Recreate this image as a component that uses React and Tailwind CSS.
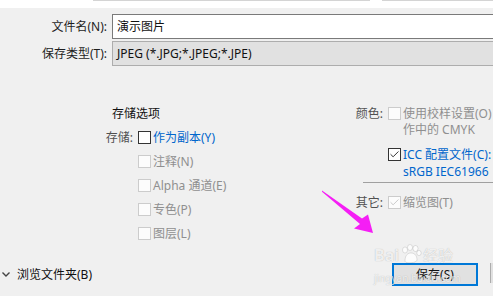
import { Check } from 'lucide-react';

const font = 'font-["Noto_Sans","Noto_Sans_CJK_SC",sans-serif]';

function Box({ checked, disabled }) {
  return (
    <span
      className={`flex h-[13px] w-[13px] shrink-0 items-center justify-center border ${
        disabled ? 'border-[#cccccc] bg-[#fcfcfc]' : 'border-[#333333] bg-white'
      }`}
    >
      {checked && (
        <Check
          className={`h-[11px] w-[11px] ${disabled ? 'text-[#c4c4c4]' : 'text-[#222222]'}`}
          strokeWidth={2}
        />
      )}
    </span>
  );
}

function Option({ label, text, checked, disabled, blue, labelWidth = 'w-[33px]' }) {
  return (
    <div className="flex h-[24px] items-center">
      <span className={`${labelWidth} shrink-0 pr-[5px] text-right text-[#505050]`}>{label}</span>
      <Box checked={checked} disabled={disabled} />
      <span
        className={`ml-[2px] whitespace-nowrap ${
          blue ? 'text-[#0066cc]' : disabled ? 'text-[#8f8f8f]' : 'text-[#1e1e1e]'
        }`}
      >
        {text}
      </span>
    </div>
  );
}

export default function App() {
  return (
    <div
      className={`relative flex h-[296px] w-[493px] flex-col overflow-hidden bg-[#f0f0f0] text-[12px] leading-[17px] text-[#1e1e1e] ${font}`}
    >
      {/* top strip */}
      <div className="flex h-[8px] shrink-0 bg-white">
        <div className="ml-[93px] h-px w-[277px] bg-[#d4d4d4]" />
        <div className="ml-[12px] h-px flex-1 bg-[#d4d4d4]" />
      </div>

      {/* file name */}
      <div className="mt-[6px] flex h-[25px] items-center">
        <span className="w-[112px] shrink-0 pr-[5px] text-right">文件名(N):</span>
        <div className="flex h-[25px] flex-1 items-center border border-r-0 border-[#7a7a7a] bg-white pl-[4px] text-[#111111]">
          演示图片
        </div>
      </div>

      {/* save type */}
      <div className="mt-[2px] flex h-[25px] items-center">
        <span className="w-[112px] shrink-0 pr-[5px] text-right">保存类型(T):</span>
        <div className="flex h-[25px] flex-1 items-center whitespace-nowrap border border-r-0 border-[#adadad] bg-[#e1e1e1] pl-[4px] text-[#111111]">
          JPEG (*.JPG;*.JPEG;*.JPE)
        </div>
      </div>

      {/* options */}
      <div className="mt-[35px] flex">
        <div className="ml-[105px] w-[250px] shrink-0">
          <div className="flex h-[24px] items-center pl-[7px] text-[#111111]">存储选项</div>
          <Option label="存储:" text="作为副本(Y)" blue />
          <Option label="" text="注释(N)" disabled />
          <Option label="" text="Alpha 通道(E)" disabled />
          <Option label="" text="专色(P)" disabled />
          <Option label="" text="图层(L)" disabled />
        </div>

        <div className="flex-1">
          <div className="flex h-[24px] items-center">
            <span className="w-[33px] shrink-0 pr-[5px] text-right text-[#505050]">颜色:</span>
            <Box disabled />
            <span className="ml-[2px] whitespace-nowrap text-[#8f8f8f]">使用校样设置(O)</span>
          </div>
          <div className="-mt-[4px] pl-[48px] whitespace-nowrap text-[#8f8f8f]">作中的 CMYK</div>

          <div className="mt-[8px] flex h-[17px] items-center">
            <span className="w-[33px] shrink-0" />
            <Box checked />
            <span className="ml-[2px] whitespace-nowrap text-[#0066cc]">ICC 配置文件(C):</span>
          </div>
          <div className="pl-[48px] whitespace-nowrap text-[#0066cc]">sRGB IEC61966</div>

          <div className="ml-[8px] mt-[2px] h-px bg-[#a0a0a0]" />

          <div className="mt-[7px] flex h-[24px] items-center">
            <span className="w-[33px] shrink-0 pr-[5px] text-right text-[#505050]">其它:</span>
            <Box checked disabled />
            <span className="ml-[2px] whitespace-nowrap text-[#8f8f8f]">缩览图(T)</span>
          </div>
        </div>
      </div>

      {/* bottom bar */}
      <div className="mb-[10px] mt-auto flex h-[23px] items-center">
        <svg className="ml-[2px] h-[5px] w-[8px]" viewBox="0 0 8 5">
          <path d="M0.5 0.5 L4 4 L7.5 0.5" fill="none" stroke="#444444" strokeWidth="1.4" />
        </svg>
        <span className="ml-[7px] text-[#111111]">浏览文件夹(B)</span>
        <button className="ml-auto flex h-[23px] w-[86px] items-center justify-center border-2 border-[#0078d7] bg-[#e1e1e1] text-[#111111]">
          保存(S)
        </button>
        <div className="ml-[12px] h-[20px] w-[3px] self-start border-l border-[#adadad] bg-[#e1e1e1]" />
      </div>

      {/* annotation arrow */}
      <svg className="pointer-events-none absolute left-0 top-0" width="493" height="296">
        <polygon
          points="322,190.5 362,218.5 368,214.5 373,233 354,228.5 360,224 322,191.8"
          fill="#f51ef5"
        />
      </svg>

      {/* watermark */}
      <div className="pointer-events-none absolute left-[374px] top-[244px] flex flex-col text-white/80 [text-shadow:0_0_1px_rgba(0,0,0,0.3)]">
        <div className="flex items-end">
          <span className="text-[16px] font-bold leading-[20px]">Bai</span>
          <svg className="mb-[1px] h-[20px] w-[24px]" viewBox="0 0 24 20">
            <g fill="white" fillOpacity="0.8" stroke="rgba(0,0,0,0.18)" strokeWidth="0.6">
              <ellipse cx="6" cy="6" rx="2.5" ry="3" />
              <ellipse cx="11" cy="3.5" rx="2.5" ry="3" />
              <ellipse cx="16.5" cy="4.5" rx="2.5" ry="3" />
              <ellipse cx="20" cy="9" rx="2.2" ry="2.6" />
              <path d="M6 17 C6 11 9 9 12 9 C16 9 18 12 18 16 C18 19 6 20 6 17Z" />
            </g>
          </svg>
          <span className="text-[15px] leading-[20px]">经验</span>
        </div>
        <span className="mt-[8px] text-[10px] leading-[10px]">jingyan.baidu.com</span>
      </div>
    </div>
  );
}
